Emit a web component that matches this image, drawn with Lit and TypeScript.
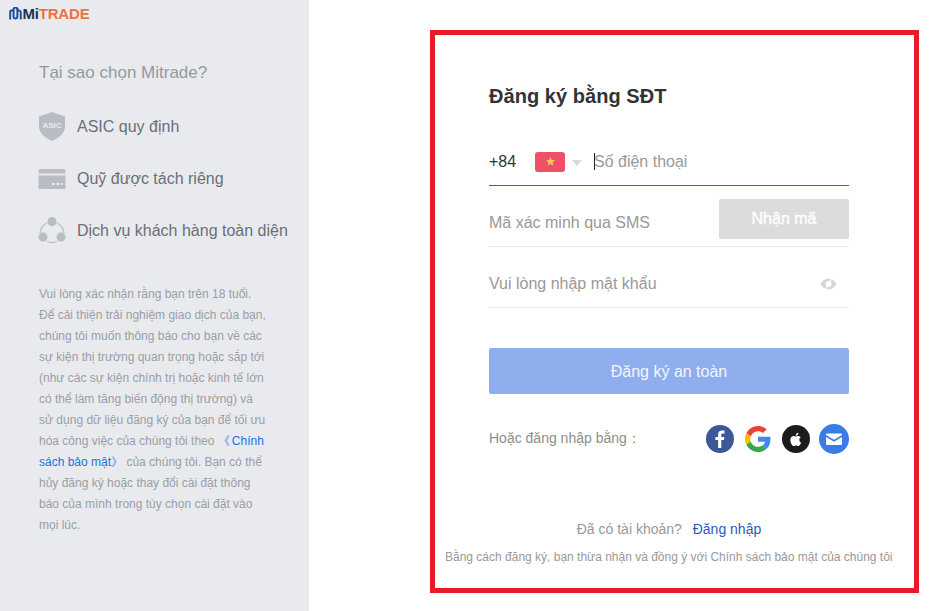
import { html, css, LitElement } from 'lit';
import { customElement } from 'lit/decorators.js';

@customElement('app-root')
export class AppRoot extends LitElement {
  static override styles = css`
    :host {
      display: flex;
      width: 931px;
      height: 611px;
      overflow: hidden;
      background: #fff;
      font-family: 'Liberation Sans', Arial, sans-serif;
    }

    .side {
      width: 309px;
      flex: none;
      background: #e8eaee;
      box-sizing: border-box;
      padding: 5px 0 0 8px;
    }

    .logo {
      display: flex;
      align-items: center;
      height: 16px;
      font-size: 15px;
      font-weight: bold;
      letter-spacing: -0.2px;
      color: #f0713c;
    }
    .logo svg {
      width: 13px;
      height: 13px;
      margin: 0 0.5px 0 1px;
    }
    .logo b {
      color: #22304f;
    }

    .pitch {
      padding: 42px 0 0 31px;
    }
    .pitch h2 {
      margin: 0 0 28px;
      font-size: 17px;
      line-height: 20px;
      font-weight: normal;
      color: #95989f;
    }

    .perk {
      display: flex;
      align-items: center;
      height: 32px;
      margin-bottom: 20px;
      font-size: 16px;
      color: #6c6f76;
    }
    .perk svg {
      width: 28px;
      height: 32px;
      margin: 0 11px 0 -1px;
      flex: none;
    }

    .note {
      margin: 37px 0 0;
      font-size: 12px;
      line-height: 21px;
      color: #9b9ea5;
      white-space: nowrap;
    }
    .note a {
      color: #1a73e0;
    }
    .note .open {
      margin-right: 2px;
    }

    .main {
      padding: 30px 0 0 121px;
    }

    .box {
      width: 489px;
      height: 563px;
      box-sizing: border-box;
      border: 5px solid #e71c2b;
      padding: 48px 65px 0 54px;
      position: relative;
    }

    h1 {
      margin: 0 0 36px;
      font-size: 20px;
      line-height: 26px;
      letter-spacing: 0.05px;
      color: #333;
    }

    .field {
      display: flex;
      align-items: center;
      box-sizing: border-box;
      border-bottom: 1px solid #e8e8e8;
      font-size: 16px;
      color: #999;
    }
    .phone {
      height: 41px;
      border-bottom: 1px solid #d4283f;
      padding-bottom: 7px;
    }
    .code {
      height: 61px;
      justify-content: space-between;
      padding-top: 13px;
    }
    .pass {
      height: 61px;
      justify-content: space-between;
      padding-top: 13px;
      padding-right: 12px;
    }

    .dial {
      color: #333;
      width: 46px;
    }
    .flag {
      width: 30px;
      height: 20px;
      border-radius: 3px;
      background: #ee5068;
      display: flex;
      align-items: center;
      justify-content: center;
    }
    .flag svg {
      width: 9px;
      height: 9px;
    }
    .caret {
      width: 0;
      height: 0;
      margin: 2px 12px 0 7px;
      border: 5px solid transparent;
      border-top: 6px solid #d9d9d9;
      border-bottom: 0;
    }
    .cursor {
      width: 1px;
      height: 17px;
      background: #222;
      margin-right: -1px;
    }

    .get {
      width: 130px;
      height: 40px;
      margin-bottom: 7px;
      box-sizing: border-box;
      border-radius: 2px;
      background: #dcdcdc;
      color: #fff;
      font-size: 16px;
      -webkit-text-stroke: 0.3px #fff;
      display: flex;
      align-items: center;
      justify-content: center;
    }
    .eye {
      width: 17px;
      height: 14px;
    }

    .submit {
      height: 46px;
      margin-top: 40px;
      padding-top: 1px;
      box-sizing: border-box;
      border-radius: 2px;
      background: #8eaeee;
      color: #f3f6fd;
      font-size: 16px;
      display: flex;
      align-items: center;
      justify-content: center;
    }

    .social {
      display: flex;
      align-items: center;
      justify-content: space-between;
      height: 30px;
      margin-top: 30px;
      font-size: 14px;
      color: #8d8d8d;
    }
    .icons {
      display: flex;
      align-items: center;
      gap: 11px;
    }
    .icons svg {
      display: block;
    }
    .icons .mail {
      margin-left: -2px;
    }

    .foot {
      position: absolute;
      left: 0;
      right: 11px;
      top: 484px;
      text-align: center;
      font-size: 14px;
      line-height: 20px;
      color: #999;
    }
    .foot a {
      color: #2a5db8;
      margin-left: 7px;
    }
    .legal {
      position: absolute;
      left: 10px;
      top: 514px;
      font-size: 12px;
      line-height: 16px;
      color: #999;
      white-space: nowrap;
    }
  `;

  override render() {
    return html`
      <aside class="side">
        <div class="logo">
          <svg viewBox="0 0 13 13" fill="none" stroke="#1d4f9e" stroke-width="2">
            <path d="M1.2 12.500V5a1.700 1.700 0 0 1 3.400 0v4.500a1.900 1.900 0 0 0 3.800 0V1" />
            <path d="M4.600 4V2.500a1.900 1.900 0 0 1 3.800 0" />
            <path d="M8.400 4a2 2 0 0 1 3.400 1.400v7.100" />
          </svg>
          <b>Mi</b>TRADE
        </div>
        <div class="pitch">
          <h2>Tại sao chọn Mitrade?</h2>
          <div class="perk">
            <svg viewBox="0 0 28 32">
              <path d="M14 1 L27 5.500 V15 C27 22 21 27 14 30 C7 27 1 22 1 15 V5.500 Z" fill="#b9bcc4" />
              <text x="14" y="17" font-size="8" font-weight="bold" text-anchor="middle" fill="#e8eaee" font-family="Liberation Sans">ASIC</text>
            </svg>
            ASIC quy định
          </div>
          <div class="perk">
            <svg viewBox="0 0 28 32">
              <path d="M2 6h24a1.500 1.500 0 0 1 1.500 1.500V10.500H.5V7.500A1.500 1.500 0 0 1 2 6Z" fill="#b9bcc4" />
              <path d="M.5 12.500h27v12a1.500 1.500 0 0 1-1.500 1.500H2a1.500 1.500 0 0 1-1.500-1.500Z" fill="#b9bcc4" />
              <rect x="14" y="20" width="3" height="2" fill="#e8eaee" />
              <rect x="18.500" y="20" width="3" height="2" fill="#e8eaee" />
              <rect x="23" y="20" width="2" height="2" fill="#e8eaee" />
            </svg>
            Quỹ được tách riêng
          </div>
          <div class="perk">
            <svg viewBox="0 0 28 32">
              <path d="M9 8 A13 13 0 0 0 2 18 M19 8 A13 13 0 0 1 26 18 M9 26.500 A13 13 0 0 0 19 26.500" fill="none" stroke="#b9bcc4" stroke-width="1.300" />
              <circle cx="14" cy="6.500" r="4.500" fill="#b9bcc4" />
              <circle cx="5" cy="22" r="4.500" fill="#b9bcc4" />
              <circle cx="23" cy="22" r="4.500" fill="#b9bcc4" />
            </svg>
            Dịch vụ khách hàng toàn diện
          </div>
          <p class="note">
            Vui lòng xác nhận rằng bạn trên 18 tuổi.<br />
            Để cải thiện trải nghiệm giao dịch của bạn,<br />
            chúng tôi muốn thông báo cho bạn về các<br />
            sự kiện thị trường quan trọng hoặc sắp tới<br />
            (như các sự kiện chính trị hoặc kinh tế lớn<br />
            có thể làm tăng biến động thị trường) và<br />
            sử dụng dữ liệu đăng ký của bạn để tối ưu<br />
            hóa công việc của chúng tôi theo <a><span class="open">《</span>Chính<br />
            sách bảo mật》</a> của chúng tôi. Bạn có thể<br />
            hủy đăng ký hoặc thay đổi cài đặt thông<br />
            báo của mình trong tùy chọn cài đặt vào<br />
            mọi lúc.
          </p>
        </div>
      </aside>
      <main class="main">
        <section class="box">
          <h1>Đăng ký bằng SĐT</h1>
          <div class="field phone">
            <span class="dial">+84</span>
            <span class="flag">
              <svg viewBox="0 0 20 20"><path d="M10 0l2.900 6.500 7.100.700-5.300 4.700 1.500 7-6.200-3.600-6.200 3.600 1.500-7L0 7.200l7.100-.700Z" fill="#fbc75a" /></svg>
            </span>
            <span class="caret"></span>
            <span class="cursor"></span>
            <span>Số điện thoại</span>
          </div>
          <div class="field code">
            <span>Mã xác minh qua SMS</span>
            <div class="get">Nhận mã</div>
          </div>
          <div class="field pass">
            <span>Vui lòng nhập mật khẩu</span>
            <svg class="eye" viewBox="0 0 17 14">
              <path d="M.5 7C3 3 5.500 1.500 8.500 1.500S14 3 16.500 7C14 11 11.500 12.500 8.500 12.500S3 11 .5 7Z" fill="#d5d5d5" />
              <circle cx="8.500" cy="7" r="3" fill="#fff" />
              <path d="M5 12.500 12 1.500" stroke="#fff" stroke-width="1.200" />
            </svg>
          </div>
          <div class="submit">Đăng ký an toàn</div>
          <div class="social">
            <span>Hoặc đăng nhập bằng：</span>
            <div class="icons">
              <svg width="28" height="28" viewBox="0 0 28 28">
                <circle cx="14" cy="14" r="14" fill="#3b5998" />
                <path d="M15.300 23v-8h2.700l.4-3.100h-3.100V10c0-.9.300-1.500 1.600-1.500h1.600V5.700c-.3 0-1.300-.1-2.400-.1-2.400 0-4 1.400-4 4.100v2.200H9.400V15h2.700v8Z" fill="#fff" />
              </svg>
              <svg width="26" height="26" viewBox="0 0 48 48">
                <path fill="#ea4335" d="M24 9.500c3.500 0 6.700 1.200 9.200 3.600l6.900-6.900C35.900 2.400 30.500 0 24 0 14.600 0 6.500 5.400 2.600 13.200l8 6.200C12.400 13.700 17.700 9.500 24 9.500Z" />
                <path fill="#4285f4" d="M47 24.500c0-1.600-.1-3.100-.4-4.500H24v9h12.900c-.6 3-2.200 5.500-4.700 7.200l7.700 6c4.500-4.200 7.100-10.300 7.100-17.700Z" />
                <path fill="#fbbc05" d="M10.600 28.600c-.5-1.400-.8-3-.8-4.600s.3-3.200.8-4.600l-8-6.200C1 16.400 0 20.100 0 24s1 7.600 2.600 10.800Z" />
                <path fill="#34a853" d="M24 48c6.500 0 11.900-2.100 15.900-5.800l-7.700-6c-2.200 1.400-4.900 2.300-8.200 2.300-6.300 0-11.600-4.200-13.400-9.900l-8 6.200C6.500 42.600 14.600 48 24 48Z" />
              </svg>
              <svg width="28" height="28" viewBox="0 0 28 28">
                <circle cx="14" cy="14" r="14" fill="#1c1c1c" />
                <path d="M17.300 14.700c0-1.600 1.300-2.300 1.400-2.400-.8-1.100-1.900-1.300-2.400-1.300-1-.1-2 .6-2.500.6s-1.300-.6-2.200-.6c-1.100 0-2.200.7-2.700 1.700-1.200 2-.3 5.100.8 6.700.6.800 1.200 1.700 2.100 1.700.8 0 1.200-.5 2.200-.5s1.300.5 2.200.5 1.500-.8 2-1.600c.6-.9.900-1.800.9-1.900-.1 0-1.800-.7-1.800-2.900ZM15.700 9.800c.4-.6.700-1.300.6-2.100-.6 0-1.400.4-1.900 1-.4.500-.8 1.200-.7 2 .8 0 1.500-.4 2-.9Z" fill="#fff" />
              </svg>
              <svg class="mail" width="30" height="30" viewBox="0 0 30 30">
                <circle cx="15" cy="15" r="15" fill="#3a7be8" />
                <path d="M8 9.500h14a1 1 0 0 1 1 1v.6l-8 4.700-8-4.700v-.6a1 1 0 0 1 1-1Z" fill="#fff" />
                <path d="M7 13l8 4.700 8-4.700v7a1 1 0 0 1-1 1H8a1 1 0 0 1-1-1Z" fill="#fff" />
              </svg>
            </div>
          </div>
          <div class="foot">Đã có tài khoản? <a>Đăng nhập</a></div>
          <div class="legal">Bằng cách đăng ký, bạn thừa nhận và đồng ý với Chính sách bảo mật của chúng tôi</div>
        </section>
      </main>
    `;
  }
}
